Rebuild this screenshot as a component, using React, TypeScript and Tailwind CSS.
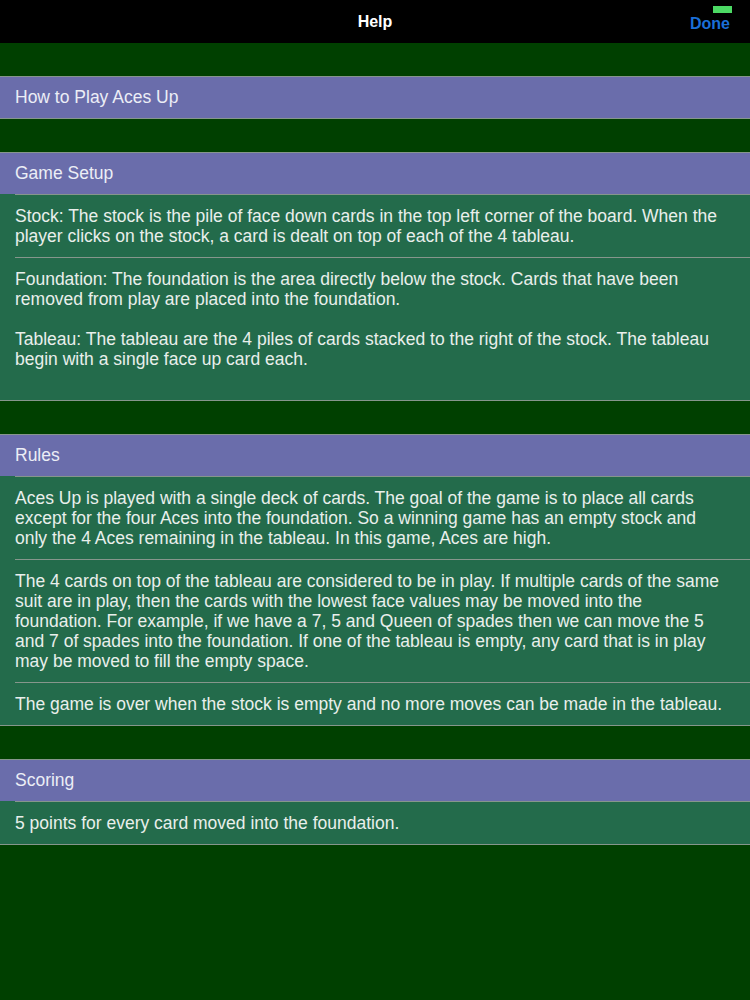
import React from "react";

type Section = { title: string; rows: string[] };

const sections: Section[] = [
  { title: "How to Play Aces Up", rows: [] },
  {
    title: "Game Setup",
    rows: [
      "Stock: The stock is the pile of face down cards in the top left corner of the board. When the player clicks on the stock, a card is dealt on top of each of the 4 tableau.",
      "Foundation: The foundation is the area directly below the stock. Cards that have been removed from play are placed into the foundation.\n\nTableau: The tableau are the 4 piles of cards stacked to the right of the stock. The tableau begin with a single face up card each.\n\u00a0",
    ],
  },
  {
    title: "Rules",
    rows: [
      "Aces Up is played with a single deck of cards. The goal of the game is to place all cards except for the four Aces into the foundation. So a winning game has an empty stock and only the 4 Aces remaining in the tableau. In this game, Aces are high.",
      "The 4 cards on top of the tableau are considered to be in play. If multiple cards of the same suit are in play, then the cards with the lowest face values may be moved into the foundation. For example, if we have a 7, 5 and Queen of spades then we can move the 5 and 7 of spades into the foundation. If one of the tableau is empty, any card that is in play may be moved to fill the empty space.",
      "The game is over when the stock is empty and no more moves can be made in the tableau.",
    ],
  },
  { title: "Scoring", rows: ["5 points for every card moved into the foundation."] },
];

function HelpSection({ section }: { section: Section }) {
  return (
    <div className="mt-[33px] border-y border-[#86968c]">
      <div className="h-[41px] bg-[#6a6dab] px-[15px] flex items-center text-[17.5px] text-[#eceef6]">
        {section.title}
      </div>
      {section.rows.map((row, i) => (
        <div key={i} className="bg-[#236b4b] pl-[15px]">
          <div className="border-t border-[#86968c] pr-[20px] py-[11px] text-[17.5px] leading-[20px] text-[#e9efeb] whitespace-pre-line">
            {row}
          </div>
        </div>
      ))}
    </div>
  );
}

export default function App() {
  return (
    <div
      className="w-[750px] h-[1000px] bg-[#004000] overflow-hidden"
      style={{ fontFamily: '"Liberation Sans", Arial, sans-serif' }}
    >
      {/* top bar */}
      <div className="relative h-[43px] bg-black flex items-center justify-center">
        <span className="text-white text-[16px] font-semibold">Help</span>
        <span className="absolute right-[20px] top-[12px] text-[#1a6fd8] text-[16px] font-bold">Done</span>
        <span className="absolute right-[18px] top-[6px] w-[19px] h-[7px] bg-[#4cd964]"></span>
      </div>

      {sections.map((s) => (
        <HelpSection key={s.title} section={s} />
      ))}
    </div>
  );
}
